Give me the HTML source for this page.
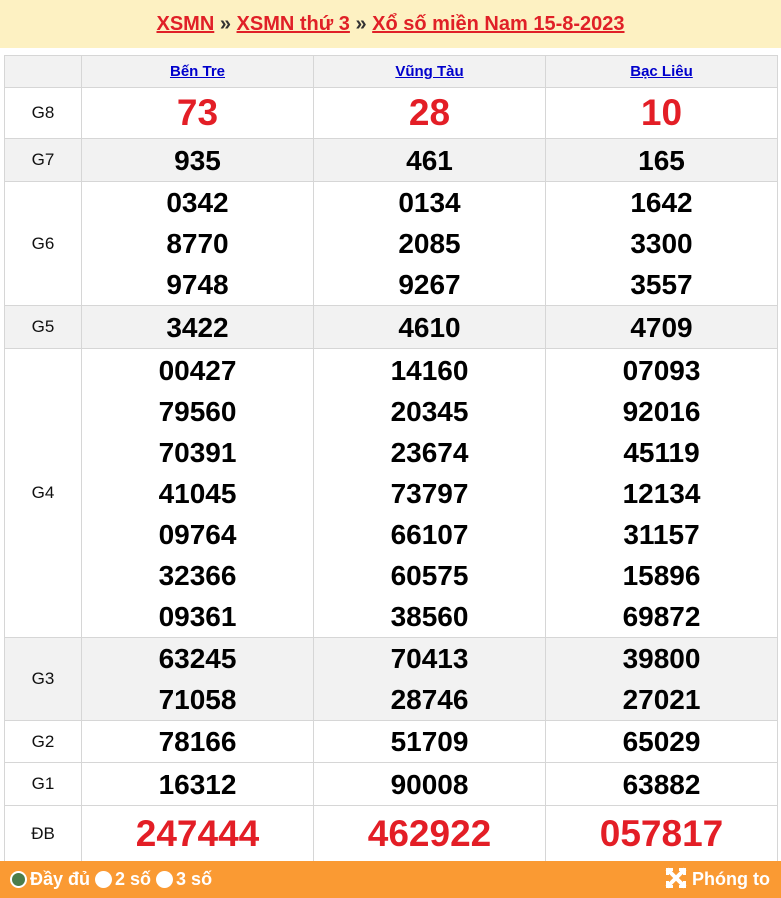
<!DOCTYPE html>
<html><head><meta charset="utf-8"><style>
*{box-sizing:border-box;margin:0;padding:0}
body{width:781px;height:898px;background:#fff;font-family:"Liberation Sans",Arial,sans-serif;overflow:hidden;position:relative}
.top{position:absolute;left:0;top:0;width:781px;height:48px;background:#fdf1c2;text-align:center;line-height:48px;font-size:20px;font-weight:bold;color:#333}
.top a{color:#e02027;text-decoration:underline}
table{position:absolute;left:4px;top:55px;width:773px;border-collapse:collapse;table-layout:fixed}
td{border:1px solid #d6d6d6;text-align:center;vertical-align:middle;padding:0}
td.l{font-size:17px;color:#111}
tr.g td{background:#f2f2f2}
.h td{height:32px;font-size:15px;font-weight:bold}
.h a{color:#0000cc;text-decoration:underline}
.n{font-size:28px;font-weight:bold;color:#000;line-height:41px;height:41px}
.r{font-size:37px;font-weight:bold;color:#e31e26}
.ft{position:absolute;left:0;top:861px;width:781px;height:37px;background:#fa9a33;color:#fff;font-weight:bold;font-size:18px;line-height:37px}
.ft .c{display:inline-block;width:17px;height:17px;border-radius:50%;background:#fff;vertical-align:-3px;margin-right:3px}
.ft .c.s{background:#4c7d4a;border:2px solid #fff}
</style></head><body>
<div class="top"><a>XSMN</a> » <a>XSMN thứ 3</a> » <a>Xổ số miền Nam 15-8-2023</a></div>
<table>
<colgroup><col style="width:77px"><col style="width:232px"><col style="width:232px"><col style="width:232px"></colgroup>
<tr class="h g"><td></td><td><a>Bến Tre</a></td><td><a>Vũng Tàu</a></td><td><a>Bạc Liêu</a></td></tr>
<tr style="height:51px"><td class="l">G8</td><td class="r">73</td><td class="r">28</td><td class="r">10</td></tr>
<tr class="g" style="height:43px"><td class="l">G7</td><td><div class="n">935</div></td><td><div class="n">461</div></td><td><div class="n">165</div></td></tr>
<tr style="height:124px"><td class="l">G6</td><td><div class="n">0342</div><div class="n">8770</div><div class="n">9748</div></td><td><div class="n">0134</div><div class="n">2085</div><div class="n">9267</div></td><td><div class="n">1642</div><div class="n">3300</div><div class="n">3557</div></td></tr>
<tr class="g" style="height:43px"><td class="l">G5</td><td><div class="n">3422</div></td><td><div class="n">4610</div></td><td><div class="n">4709</div></td></tr>
<tr style="height:289px"><td class="l">G4</td>
<td><div class="n">00427</div><div class="n">79560</div><div class="n">70391</div><div class="n">41045</div><div class="n">09764</div><div class="n">32366</div><div class="n">09361</div></td>
<td><div class="n">14160</div><div class="n">20345</div><div class="n">23674</div><div class="n">73797</div><div class="n">66107</div><div class="n">60575</div><div class="n">38560</div></td>
<td><div class="n">07093</div><div class="n">92016</div><div class="n">45119</div><div class="n">12134</div><div class="n">31157</div><div class="n">15896</div><div class="n">69872</div></td></tr>
<tr class="g" style="height:83px"><td class="l">G3</td><td><div class="n">63245</div><div class="n">71058</div></td><td><div class="n">70413</div><div class="n">28746</div></td><td><div class="n">39800</div><div class="n">27021</div></td></tr>
<tr style="height:42px"><td class="l">G2</td><td><div class="n">78166</div></td><td><div class="n">51709</div></td><td><div class="n">65029</div></td></tr>
<tr style="height:43px"><td class="l">G1</td><td><div class="n">16312</div></td><td><div class="n">90008</div></td><td><div class="n">63882</div></td></tr>
<tr style="height:56px"><td class="l">ĐB</td><td class="r">247444</td><td class="r">462922</td><td class="r">057817</td></tr>
</table>
<div class="ft"><span style="position:absolute;left:10px"><span class="c s"></span>Đầy đủ <span class="c"></span>2 số <span class="c"></span>3 số</span>
<span style="position:absolute;right:11px"><svg width="22" height="22" viewBox="0 0 22 22" style="vertical-align:-4px;margin-right:5px"><path d="M2 2L20 20M20 2L2 20" stroke="#fff" stroke-width="4"/><path d="M1 1h7v3H4v4H1zM21 1h-7v3h4v4h3zM1 21h7v-3H4v-4H1zM21 21h-7v-3h4v-4h3z" fill="#fff"/></svg>Phóng to</span></div>
</body></html>
